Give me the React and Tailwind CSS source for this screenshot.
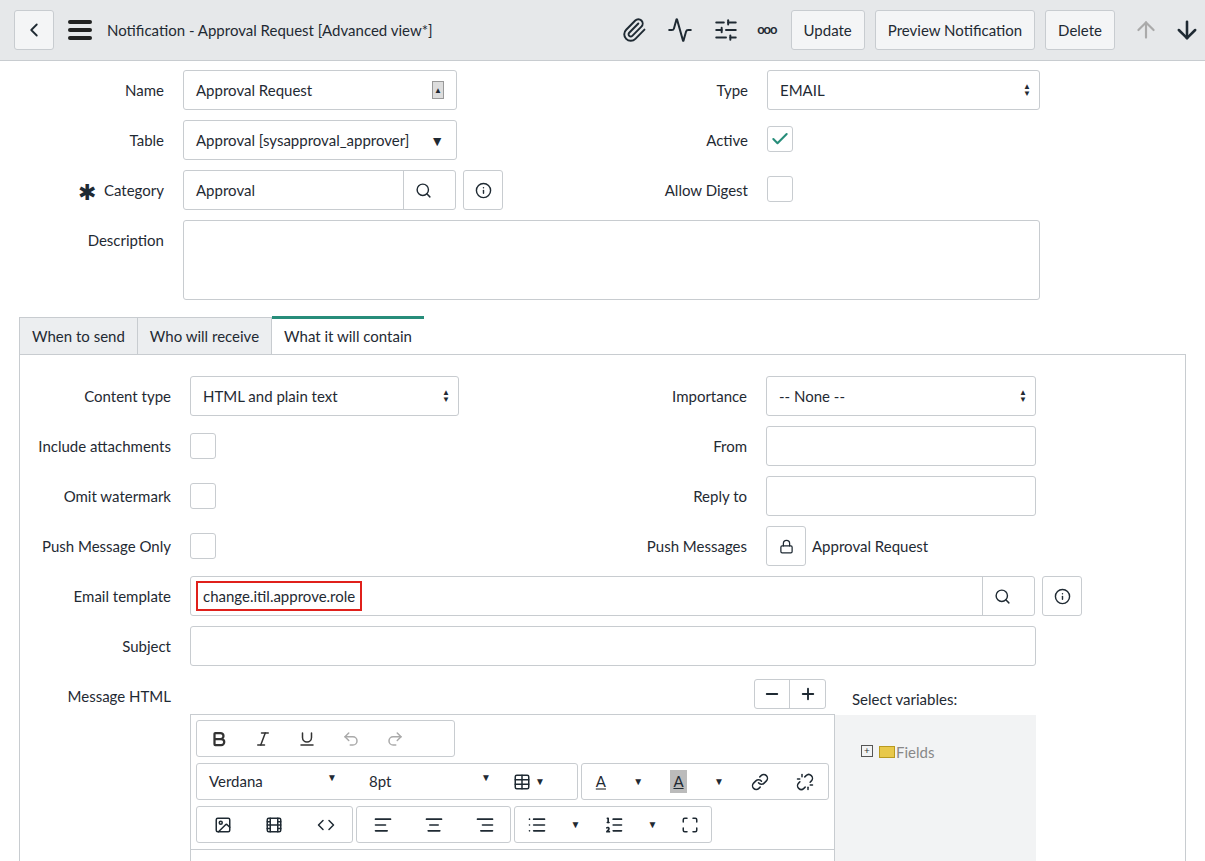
import React from "react";
import { ChevronLeft, Paperclip, Activity, SlidersHorizontal, ArrowUp, ArrowDown, Search, Info, Check, Lock, Bold, Italic, Underline, Undo2, Redo2, Table, Link, Unlink, Image, Film, Code, AlignLeft, AlignCenter, AlignRight, List, ListOrdered, Maximize, Minus, Plus } from "lucide-react";

const F = { fontFamily: "Lato, 'Open Sans', sans-serif" };
const inp = "h-10 border border-[#c8ccd0] rounded-[3px] bg-white flex items-center px-3 text-[15px] text-[#1f2a33]";

function Sel({ w, text }) {
  return <div className={inp + " justify-between pr-2"} style={{ width: w }}><span>{text}</span><span className="text-[8px] leading-[7px] flex flex-col">▲<br/>▼</span></div>;
}
function Box() { return <div className="w-[26px] h-[26px] border border-[#c8ccd0] rounded-[3px] bg-white" />; }

function Row({ lw, label, children, h = "h-[50px]" }) {
  return <div className={"flex items-start " + h}><div className="text-right pr-[19px] pt-[9px] text-[15px] text-[#1f2a33]" style={{ width: lw }}>{label}</div>{children}</div>;
}

function TB({ children, className = "" }) {
  return <div className={"h-[37px] border border-[#c8ccd0] rounded-[3px] flex items-center bg-white " + className}>{children}</div>;
}
const ib = "w-[44px] flex justify-center text-[#333]";

export default function App() {
  return (
    <div style={F} className="w-[1205px] h-[861px] overflow-hidden bg-white text-[#1f2a33]">
      <div className="h-[61px] bg-[#e6e8ea] border-b border-[#c8ccd0] flex items-center pl-[14px] pr-1">
        <div className="w-[40px] h-[40px] border border-[#c8ccd0] rounded-[3px] bg-[#f4f5f6] flex items-center justify-center"><ChevronLeft size={22} strokeWidth={2} /></div>
        <div className="ml-[14px] flex flex-col gap-[4px]"><div className="w-[24px] h-[4px] bg-[#222] rounded" /><div className="w-[24px] h-[4px] bg-[#222] rounded" /><div className="w-[24px] h-[4px] bg-[#222] rounded" /></div>
        <div className="ml-[15px] text-[15px]">Notification - Approval Request [Advanced view*]</div>
        <div className="flex-1" />
        <Paperclip size={26} strokeWidth={1.8} className="mr-[20px]" />
        <Activity size={26} strokeWidth={1.8} className="mr-[20px]" />
        <SlidersHorizontal size={26} strokeWidth={1.8} className="mr-[18px]" />
        <span className="mr-[14px] text-[13px] font-bold tracking-[-1px]">ooo</span>
        {["Update", "Preview Notification", "Delete"].map(t => <div key={t} className="h-[40px] px-3 mr-[10px] border border-[#c8ccd0] rounded-[3px] bg-[#f4f5f6] flex items-center text-[15px]">{t}</div>)}
        <ArrowUp size={26} className="text-[#aaa] mx-[8px]" />
        <ArrowDown size={28} strokeWidth={2.2} className="ml-[6px]" />
      </div>

      <div className="pt-[9px] flex">
        <div>
          <Row lw={183} label="Name"><div className={inp + " w-[274px] justify-between"}><span>Approval Request</span><span className="w-[12px] h-[18px] border border-[#999] bg-[#ddd] text-[8px] flex items-center justify-center">▲</span></div></Row>
          <Row lw={183} label="Table"><div className={inp + " w-[274px] justify-between"}><span>Approval [sysapproval_approver]</span><span className="text-[14px]">▼</span></div></Row>
          <Row lw={183} label={<span><span className="text-[22px] leading-[0] mr-2 relative top-[4px]">✱</span>Category</span>}>
            <div className={inp + " w-[273px] p-0 pl-3 justify-between"}><span>Approval</span><span className="w-[40px] h-full border-l border-[#c8ccd0] flex items-center justify-center"><Search size={17} /></span></div>
            <div className="ml-[7px] w-[40px] h-[40px] border border-[#c8ccd0] rounded-[3px] flex items-center justify-center"><Info size={17} /></div>
          </Row>
          <Row lw={183} label="Description" h="h-[97px]"><div className="w-[857px] h-[80px] border border-[#c8ccd0] rounded-[3px]" /></Row>
        </div>
        <div className="absolute left-[583px] top-[70px]">
          <Row lw={184} label="Type"><Sel w={273} text="EMAIL" /></Row>
          <Row lw={184} label="Active"><div className="mt-[6px] w-[26px] h-[26px] border border-[#c8ccd0] rounded-[3px] flex items-center justify-center"><Check size={20} className="text-[#278d7a]" strokeWidth={2.5} /></div></Row>
          <Row lw={184} label="Allow Digest"><div className="mt-[6px]"><Box /></div></Row>
        </div>
      </div>

      <div className="ml-[19px] -mt-[1px] flex text-[15px]">
        <div className="h-[37px] mt-[1px] px-3 flex items-center bg-[#eceef0] border border-[#c8ccd0] border-b-0">When to send</div>
        <div className="h-[37px] mt-[1px] px-3 flex items-center bg-[#eceef0] border border-[#c8ccd0] border-b-0 border-l-0">Who will receive</div>
        <div className="h-[38px] px-3 flex items-center bg-white border-t-[3px] border-[#278d7a]">What it will contain</div>
      </div>
      <div className="ml-[19px] w-[1167px] border-l border-t border-r border-[#c8ccd0] pt-[21px] h-[520px] relative">
        <Row lw={170} label="Content type"><Sel w={269} text="HTML and plain text" /></Row>
        <Row lw={170} label="Include attachments"><div className="mt-[7px]"><Box /></div></Row>
        <Row lw={170} label="Omit watermark"><div className="mt-[7px]"><Box /></div></Row>
        <Row lw={170} label="Push Message Only"><div className="mt-[7px]"><Box /></div></Row>
        <Row lw={170} label="Email template">
          <div className={inp + " w-[845px] p-0 pl-[5px] justify-between"}><span className="border-2 border-[#e0201b] px-[5px] h-[30px] flex items-center">change.itil.approve.role</span><span className="w-[40px] h-full border-l border-[#c8ccd0] flex items-center justify-center"><Search size={17} /></span></div>
          <div className="ml-[7px] w-[40px] h-[40px] border border-[#c8ccd0] rounded-[3px] flex items-center justify-center"><Info size={17} /></div>
        </Row>
        <Row lw={170} label="Subject"><div className={inp + " w-[846px]"} /></Row>
        <div className="flex">
          <div className="w-[170px] text-right pr-[19px] pt-[9px] text-[15px]">Message HTML</div>
          <div className="w-[645px] pt-[38px]">
            <div className="border border-[#c8ccd0] h-[200px] p-[5px] pt-[5px] flex flex-col gap-[6px]">
              <TB className="w-[259px]"><span className={ib}><Bold size={18} strokeWidth={3} /></span><span className={ib}><Italic size={18} /></span><span className={ib}><Underline size={18} /></span><span className={ib + " text-[#aaa]"}><Undo2 size={18} /></span><span className={ib + " text-[#aaa]"}><Redo2 size={18} /></span></TB>
              <div className="flex gap-[3px]">
                <TB className="w-[384px] text-[15px]"><span className="w-[152px] pl-3 flex justify-between pr-3">Verdana<span className="text-[10px]">▼</span></span><span className="w-[154px] pl-[20px] flex justify-between pr-3">8pt<span className="text-[10px]">▼</span></span><Table size={18} className="ml-[10px]" /><span className="text-[10px] ml-1">▼</span></TB>
                <TB className="w-[249px] justify-around text-[15px]"><span className="underline decoration-2 decoration-[#888]">A</span><span className="text-[10px]">▼</span><span className="bg-[#bbb] px-[3px] underline">A</span><span className="text-[10px]">▼</span><Link size={18} /><Unlink size={18} /></TB>
              </div>
              <div className="flex gap-[3px]">
                <TB className="w-[157px] justify-around"><Image size={18} /><Film size={18} /><Code size={18} /></TB>
                <TB className="w-[155px] justify-around"><AlignLeft size={20} /><AlignCenter size={20} /><AlignRight size={20} /></TB>
                <TB className="w-[198px] justify-around"><List size={20} /><span className="text-[10px]">▼</span><ListOrdered size={20} /><span className="text-[10px]">▼</span><Maximize size={18} /></TB>
              </div>
              <div className="border-t border-[#c8ccd0] -mx-[5px]" />
            </div>
          </div>
          <div>
            <div className="absolute left-[734px] top-[324px] h-[30px] flex border border-[#c8ccd0] rounded-[3px]"><span className="w-[35px] flex items-center justify-center border-r border-[#c8ccd0]"><Minus size={18} strokeWidth={2.5} /></span><span className="w-[35px] flex items-center justify-center"><Plus size={18} strokeWidth={2.5} /></span></div>
            <div className="absolute left-[832px] top-[333px] text-[15px]">Select variables:</div>
            <div className="mt-[39px] w-[201px] h-[200px] bg-[#f2f3f4] pt-[26px] pl-[26px] flex gap-[6px] items-start text-[15px] text-[#888]"><span className="w-[12px] h-[12px] border border-[#555] text-[10px] leading-[9px] text-center text-[#333] mt-[4px]">+</span><span className="flex items-center"><span className="w-[16px] h-[12px] bg-[#e8c84a] border border-[#b99a20] inline-block mr-[1px]" />Fields</span></div>
          </div>
        </div>
        <div className="absolute left-[564px] top-[21px]">
          <Row lw={182} label="Importance"><Sel w={270} text="-- None --" /></Row>
          <Row lw={182} label="From"><div className={inp + " w-[270px]"} /></Row>
          <Row lw={182} label="Reply to"><div className={inp + " w-[270px]"} /></Row>
          <Row lw={182} label="Push Messages"><div className="w-[40px] h-[40px] border border-[#c8ccd0] rounded-[3px] flex items-center justify-center"><Lock size={15} /></div><span className="ml-[6px] pt-[9px] text-[15px]">Approval Request</span></Row>
        </div>
      </div>
    </div>
  );
}
